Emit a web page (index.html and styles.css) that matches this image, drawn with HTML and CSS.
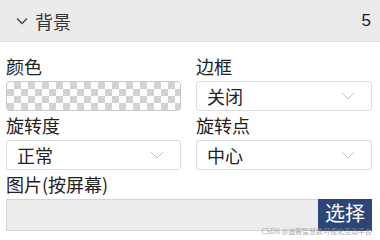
FILE: index.html
```html
<!DOCTYPE html>
<html lang="zh">
<head>
<meta charset="utf-8">
<link rel="stylesheet" href="styles.css">
</head>
<body>
<div class="panel">
  <div class="head">
    <div class="head-left">
      <svg class="caret" width="12" height="8" viewBox="0 0 12 8"><path d="M1 1.5 L6 6.5 L11 1.5" fill="none" stroke="#444" stroke-width="1.3"/></svg>
      <span class="title">背景</span>
    </div>
    <span class="count">5</span>
  </div>
  <div class="body">
    <div class="grid">
      <div class="field">
        <div class="label">颜色</div>
        <div class="swatch"></div>
      </div>
      <div class="field">
        <div class="label">边框</div>
        <div class="select"><span>关闭</span><svg width="14" height="8" viewBox="0 0 14 8"><path d="M1 1 L7 7 L13 1" fill="none" stroke="#c4c4c4" stroke-width="1"/></svg></div>
      </div>
      <div class="field">
        <div class="label">旋转度</div>
        <div class="select"><span>正常</span><svg width="14" height="8" viewBox="0 0 14 8"><path d="M1 1 L7 7 L13 1" fill="none" stroke="#c4c4c4" stroke-width="1"/></svg></div>
      </div>
      <div class="field">
        <div class="label">旋转点</div>
        <div class="select"><span>中心</span><svg width="14" height="8" viewBox="0 0 14 8"><path d="M1 1 L7 7 L13 1" fill="none" stroke="#c4c4c4" stroke-width="1"/></svg></div>
      </div>
    </div>
    <div class="field">
      <div class="label">图片(按屏幕)</div>
      <div class="file">
        <div class="file-input"></div>
        <div class="btn">选择</div>
      </div>
    </div>
  </div>
  <div class="mark">CSDN @迪赛智慧数可视化互动平台</div>
</div>
</body>
</html>
```
FILE: styles.css
```css
* { box-sizing: border-box; }
html, body { margin: 0; padding: 0; background: #fff; }
body {
  font-family: "Noto Sans CJK SC", "Noto Sans", sans-serif;
  color: #222;
  width: 380px;
  height: 240px;
  overflow: hidden;
}
.panel { position: relative; height: 240px; }
.head {
  height: 42px;
  background: #ebebeb;
  border-bottom: 1px solid #dcdcdc;
  display: flex;
  align-items: center;
  justify-content: space-between;
  padding: 0 9px 0 16px;
}
.head-left { display: flex; align-items: center; gap: 7px; }
.caret { margin-top: 1px; }
.title { font-size: 18px; color: #333; line-height: 22px; }
.count { font-family: "Liberation Sans", sans-serif; font-size: 17px; color: #222; }
.body { padding: 13px 8px 0 6px; }
.grid {
  display: grid;
  grid-template-columns: 175px 176px;
  column-gap: 15px;
  row-gap: 3px;
  margin-bottom: 3px;
}
.label { font-size: 18px; line-height: 22px; margin-bottom: 4px; padding-left: 0; color: #222; }
.swatch {
  height: 30px;
  border: 1px solid #c8c8c8;
  border-radius: 4px;
  background-color: #fff;
  background-image:
    linear-gradient(45deg, #d2d2d2 25%, transparent 25%, transparent 75%, #d2d2d2 75%),
    linear-gradient(45deg, #d2d2d2 25%, transparent 25%, transparent 75%, #d2d2d2 75%);
  background-size: 14px 14px;
  background-position: 0 0, 7px 7px;
}
.select {
  height: 30px;
  border: 1px solid #dcdcdc;
  border-radius: 3px;
  display: flex;
  align-items: center;
  justify-content: space-between;
  padding: 0 16px 0 10px;
  font-size: 18px;
  color: #222;
}
.file { display: flex; height: 32px; }
.file-input {
  flex: 1;
  background: #ececec;
  border: 1px solid #d4d4d4;
  border-right: none;
}
.btn {
  width: 54px;
  background: #2c4675;
  color: #fff;
  font-size: 20px;
  line-height: 24px;
  display: flex;
  align-items: flex-start;
  justify-content: center;
  padding-top: 2px;
}
.mark {
  position: absolute;
  right: 8px;
  bottom: 5px;
  font-size: 7px;
  line-height: 8px;
  color: #9a9a9a;
  opacity: 0.85;
  white-space: nowrap;
}
```
